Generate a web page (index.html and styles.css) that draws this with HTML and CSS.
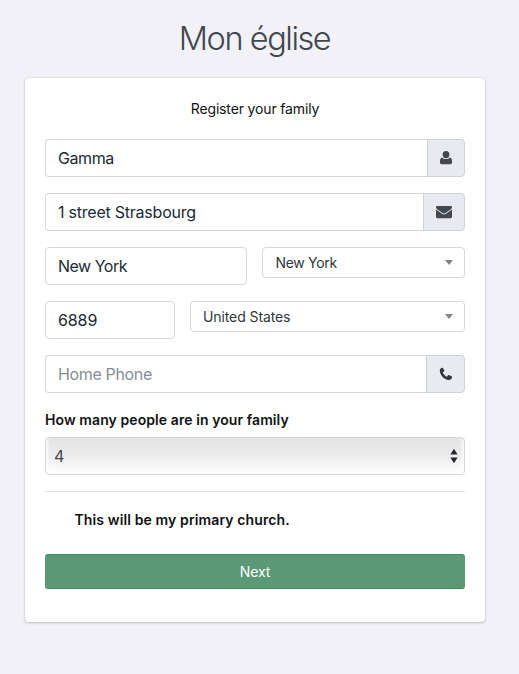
FILE: index.html
```html
<!DOCTYPE html>
<html lang="en">
<head>
<meta charset="utf-8">
<title>Mon église</title>
<link rel="stylesheet" href="styles.css">
</head>
<body>
<h1 class="title"><span>Mon église</span></h1>
<form class="card">
  <p class="intro"><span>Register your family</span></p>
  <div class="group">
    <div class="field"><span class="gamma">Gamma</span></div>
    <div class="addon user"><svg width="14" height="16" viewBox="0 0 14 16"><ellipse cx="7" cy="4.6" rx="3.4" ry="3.7"/><path d="M3.1 7.4C1.5 7.8.9 9.6.9 12c0 1.500.9 2.300 2.200 2.300h7.800c1.300 0 2.200-.8 2.200-2.300 0-2.400-.6-4.200-2.200-4.600C10 8.500 8.600 9 7 9s-3-.5-3.900-1.600z"/></svg></div>
  </div>
  <div class="group">
    <div class="field"><span class="street">1 street Strasbourg</span></div>
    <div class="addon mail"><svg width="16" height="16" viewBox="0 0 16 16"><path d="M0 3.300C0 2.500.5 2 1.300 2h13.400c.8 0 1.300.5 1.300 1.300 0 .8-.7 1.600-1.400 2.100L9.500 8.900c-1 .7-2 .7-3 0L1.400 5.400C.7 4.900 0 4.100 0 3.300z"/><path d="M0 5.600l6 4.200c1.300.9 2.700.9 4 0l6-4.200v7.200c0 .8-.6 1.400-1.400 1.400H1.400C.6 14.200 0 13.600 0 12.800z"/></svg></div>
  </div>
  <div class="row city">
    <div class="field"><span class="town">New York</span></div>
    <div class="picker"><span class="state">New York</span><i class="caret"></i></div>
  </div>
  <div class="row zip">
    <div class="field"><span class="code">6889</span></div>
    <div class="picker"><span class="country">United States</span><i class="caret"></i></div>
  </div>
  <div class="group">
    <div class="field placeholder"><span class="phone-text">Home Phone</span></div>
    <div class="addon phone"><svg width="14" height="16" viewBox="0 0 14 16"><path d="M3.200 1.700C2 2 .8 2.800.8 4.600c0 4.600 4.600 9.400 9.100 9.400 1.800 0 2.700-1.100 3.100-2.400.1-.5.1-.8-.2-1l-2.700-1.500c-.5-.2-.8 0-1.100.4l-.8 1c-.3.300-.6.300-1 .1C5.800 9.700 4.700 8.500 3.900 7c-.2-.4-.1-.6.2-.9l.9-.7c.4-.3.500-.6.300-1L4 2c-.2-.3-.4-.4-.8-.3z"/></svg></div>
  </div>
  <div class="label"><span>How many people are in your family</span></div>
  <div class="select"><span>4</span><svg width="8" height="16" viewBox="0 0 8 16"><path d="M4 .8l3.600 5.700H.4zM4 15.200L.4 9.500h7.200z"/></svg></div>
  <hr>
  <div class="primary"><span>This will be my primary church.</span></div>
  <button class="next" type="button"><span>Next</span></button>
</form>
</body>
</html>
```
FILE: styles.css
```css
* { box-sizing: border-box; }
body {
  margin: 0;
  min-height: 674px;
  background: #f2f1f7;
  color: #101214;
  font-family: Inter, "Liberation Sans", sans-serif;
}
span { white-space: nowrap; }
.title {
  margin: 0;
  height: 77.500px;
  padding-right: 10px;
  color: #41484f;
  font-size: 32.500px;
  font-weight: 300;
  line-height: 78px;
  letter-spacing: -1.450px;
  text-align: center;
}
.card {
  width: 460px;
  height: 544.500px;
  margin-left: 25px;
  padding: 20px;
  background: #fff;
  border-radius: 4px;
  box-shadow: 0 0 1px rgba(0,0,0,.2), 0 1px 3px rgba(0,0,0,.2);
}
.intro {
  margin: 0 0 20px;
  height: 21px;
  font-size: 14px;
  line-height: 21px;
  text-align: center;
  letter-spacing: -.15px;
}
.group { display: flex; height: 38px; margin-bottom: 16px; }
.field {
  flex: 1;
  height: 38px;
  border: 1px solid #d3d7df;
  border-radius: 4px;
  padding-left: 12px;
  color: #202a35;
  font-size: 16px;
  line-height: 37px;
}
.gamma { letter-spacing: -.4px; }
.street { letter-spacing: -.23px; }
.town { letter-spacing: -.5px; }
.code { letter-spacing: -.1px; }
.phone-text { letter-spacing: -.35px; }
.group .field { border-radius: 4px 0 0 4px; border-right: 0; }
.placeholder { color: #868d95; }
.addon {
  display: flex;
  align-items: center;
  justify-content: center;
  border: 1px solid #cdd2da;
  border-radius: 0 4px 4px 0;
  background: #e9eaef;
  fill: #414850;
}
.user { width: 38px; }
.mail { width: 42px; }
.phone { width: 39px; fill: #30363c; }
.row { display: grid; gap: 15px; margin-bottom: 16px; }
.city { grid-template-columns: 202.400px 1fr; }
.zip { grid-template-columns: 130px 1fr; }
.picker {
  display: flex;
  align-items: center;
  justify-content: space-between;
  height: 31px;
  padding: 0 11px 0 12px;
  border: 1px solid #d3d7df;
  border-radius: 4px;
  color: #30363c;
  font-size: 14px;
}
.state { letter-spacing: -.3px; }
.country { letter-spacing: -.1px; }
.caret { border: 4px solid transparent; border-top: 5px solid #848484; border-bottom: 0; }
.label { height: 29px; margin-top: -4px; font-size: 14px; font-weight: 600; line-height: 29px; letter-spacing: .08px; }
.select {
  display: flex;
  align-items: center;
  justify-content: space-between;
  height: 38px;
  margin-top: 3px;
  padding: 0 6px 0 8px;
  border: 1px solid #d3d7df;
  border-radius: 4px;
  background: linear-gradient(#e4e4e4, #ebebeb 45%, #fff);
  box-shadow: inset 4px 0 3px -2px rgba(255,255,255,.8), inset -4px 0 3px -2px rgba(255,255,255,.8), inset 0 0 2px rgba(0,0,0,.06);
  color: #41484f;
  font-size: 16px;
}
.select svg { fill: #24292e; }
hr { height: 1px; margin: 16px 0 17px; border: 0; background: #e5e5e8; }
.primary { height: 21px; padding-left: 29.500px; font-size: 14px; font-weight: 600; line-height: 21px; letter-spacing: .12px; }
.next {
  display: block;
  width: 100%;
  height: 35px;
  margin-top: 24px;
  padding: 0;
  border: 1px solid #3f8e63;
  border-left-color: #5b9976;
  border-right-color: #5b9976;
  border-radius: 3px;
  background: #5b9976;
  color: #fff;
  font: 14px Inter, "Liberation Sans", sans-serif;
  letter-spacing: -.1px;
}
```
